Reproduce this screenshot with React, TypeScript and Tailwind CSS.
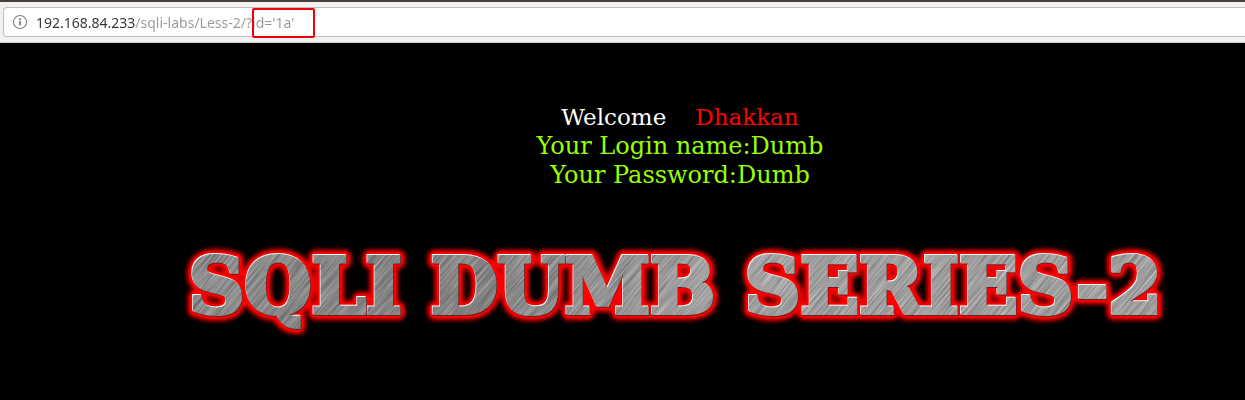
import React from "react";

function AddressBar() {
  return (
    <header className="border-t-2 border-[#45423b] bg-[#f2f1f0] pt-[5px] pb-[5px] pl-[3px] border-b border-b-[#c9cbc8]">
      <form className="relative flex h-[30px] items-center rounded-l border border-r-0 border-[#c1bfbc] bg-white pl-2">
        <button type="button" aria-label="Site information" className="mr-2 size-4 shrink-0">
          <svg viewBox="0 0 16 16" className="size-4" fill="none" stroke="#808080">
            <circle cx="8" cy="8" r="6.5" strokeWidth="1.1" />
            <path d="M8 7v4.5" strokeWidth="1.8" />
            <path d="M8 4.2v1.8" strokeWidth="1.8" />
          </svg>
        </button>
        <input
          type="text"
          aria-label="Address"
          defaultValue="192.168.84.233/sqli-labs/Less-2/?id='1a'"
          className="h-7 w-full bg-[linear-gradient(to_right,#333333_99px,#999999_99px)] bg-clip-text font-['Noto_Sans',sans-serif] text-sm text-transparent outline-none"
        />
        <span className="pointer-events-none absolute top-0 left-[248px] h-[30px] w-[63px] rounded-xs border-2 border-[#f00008]" />
      </form>
    </header>
  );
}

function Words() {
  return (
    <>
      <text x="9" y="73">SQLI</text>
      <text x="251" y="73">DUMB</text>
      <text x="565" y="73">SERIES-2</text>
    </>
  );
}

function TitleLogo() {
  return (
    <svg
      viewBox="0 0 1000 100"
      className="mx-auto block w-full max-w-[1000px] font-['DejaVu_Serif',serif] text-[77px] font-bold"
    >
      <defs>
        <filter id="glow" x="-20" y="-20" width="1040" height="140" filterUnits="userSpaceOnUse">
          <feGaussianBlur stdDeviation="2" />
        </filter>
        <filter
          id="brush"
          x="-100"
          y="-900"
          width="1400"
          height="1900"
          filterUnits="userSpaceOnUse"
          colorInterpolationFilters="sRGB"
        >
          <feTurbulence type="fractalNoise" baseFrequency="0.02 0.8" numOctaves="2" seed="4" />
          <feColorMatrix values="0.5 0 0 0 0.34  0.5 0 0 0 0.34  0.5 0 0 0 0.34  0 0 0 0 1" />
        </filter>
        <linearGradient id="sheen">
          <stop offset="0" stopColor="#000000" stopOpacity="0.06" />
          <stop offset="0.3" stopColor="#000000" stopOpacity="0.14" />
          <stop offset="0.55" stopColor="#ffffff" stopOpacity="0.1" />
          <stop offset="1" stopColor="#ffffff" stopOpacity="0.06" />
        </linearGradient>
        <mask id="letters" maskUnits="userSpaceOnUse" x="0" y="0" width="1000" height="100">
          <g fill="white" stroke="white" strokeWidth="4">
            <Words />
          </g>
        </mask>
      </defs>
      <g fill="#ff0000" stroke="#ff0000" strokeWidth="14" strokeLinejoin="round" filter="url(#glow)" aria-hidden="true">
        <Words />
      </g>
      <g fill="#ff0000" stroke="#ff0000" strokeWidth="9" strokeLinejoin="round" aria-hidden="true">
        <Words />
      </g>
      <g transform="translate(-0.7 -0.7)" fill="white" stroke="white" strokeWidth="4" aria-hidden="true">
        <Words />
      </g>
      <g transform="translate(0.7 0.7)" fill="#6b2020" stroke="#6b2020" strokeWidth="4" aria-hidden="true">
        <Words />
      </g>
      <g mask="url(#letters)">
        <g transform="rotate(-50 500 50)">
          <rect x="0" y="-500" width="1000" height="1100" filter="url(#brush)" />
        </g>
        <rect width="1000" height="100" fill="url(#sheen)" />
      </g>
    </svg>
  );
}

export default function App() {
  return (
    <div className="min-h-screen bg-black">
      <AddressBar />
      <main className="pt-[60px] pl-[115px]">
        <div className="text-center font-['DejaVu_Serif',serif] text-2xl leading-[29px] text-[#99ff00]">
          <p className="text-[23px] leading-[29px] text-white">
            Welcome<span className="ml-[29px] text-[#ff0000]">Dhakkan</span>
          </p>
          <p>Your Login name:Dumb</p>
          <p>Your Password:Dumb</p>
        </div>
        <h1 className="mt-[50px]" aria-label="SQLI DUMB SERIES-2">
          <TitleLogo />
        </h1>
      </main>
    </div>
  );
}
